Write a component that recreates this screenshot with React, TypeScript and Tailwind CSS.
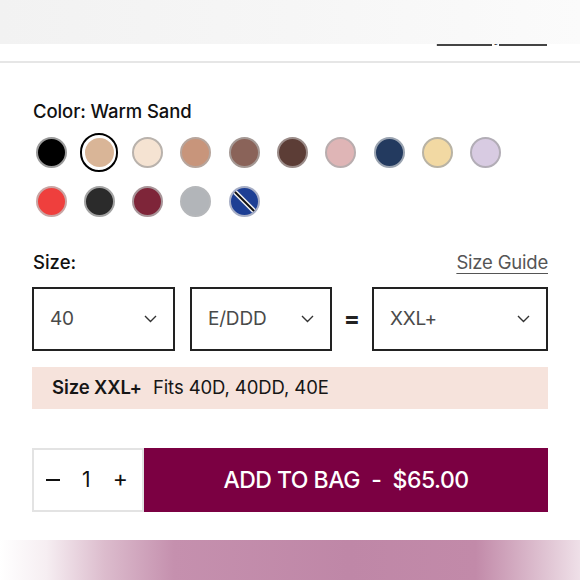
import React from "react";

const swatchesRow1 = [
  { c: "#000000", b: "#9a9a9a" },
  { c: "#d9b597", b: "#d9b597", selected: true },
  { c: "#f5e3d2", b: "#b9b2ac" },
  { c: "#c8957b", b: "#b7a59c" },
  { c: "#8a6359", b: "#a49894" },
  { c: "#5c3d36", b: "#9b8c89" },
  { c: "#dfb5b6", b: "#b9adae" },
  { c: "#233a5f", b: "#9aa3b0" },
  { c: "#f2d9a3", b: "#b9b3a4" },
  { c: "#d8cbe2", b: "#b2adb6" },
];

const swatchesRow2 = [
  { c: "#ef3f3d", b: "#c9a5a4" },
  { c: "#2b2b2b", b: "#a3a3a3" },
  { c: "#7e2539", b: "#a89599" },
  { c: "#b2b5b9", b: "#b5b7ba" },
  { c: "#1d3f94", b: "#a7aec5", striped: true },
];

type Sw = { c: string; b: string; selected?: boolean; striped?: boolean };

function Swatch({ s }: { s: Sw }) {
  return (
    <div className="w-[38px] h-[38px] flex items-center justify-center">
      {s.selected ? (
        <div className="w-[39px] h-[39px] rounded-full border-2 border-black flex items-center justify-center">
          <div className="w-[29px] h-[29px] rounded-full" style={{ backgroundColor: s.c }} />
        </div>
      ) : (
        <div
          className="w-[31px] h-[31px] rounded-full border-2 overflow-hidden relative"
          style={{ backgroundColor: s.c, borderColor: s.b }}
        >
          {s.striped && (
            <svg className="absolute inset-0" width="27" height="27" viewBox="0 0 27 27">
              <line x1="3" y1="3" x2="24" y2="24" stroke="#f2f2f2" strokeWidth="5" />
              <line x1="3" y1="3" x2="24" y2="24" stroke="#111" strokeWidth="2" />
            </svg>
          )}
        </div>
      )}
    </div>
  );
}

function Chevron() {
  return (
    <svg width="13" height="8" viewBox="0 0 13 8" fill="none">
      <polyline points="1,1 6.5,6.5 12,1" stroke="#333" strokeWidth="1.4" />
    </svg>
  );
}

function Select({ value, w }: { value: string; w: string }) {
  return (
    <div className={`${w} h-[64px] border-2 border-[#222] flex items-center justify-between pl-[16px] pr-[16px]`}>
      <span className="text-[19px] text-[#4a4a4a] tracking-[-0.2px]">{value}</span>
      <Chevron />
    </div>
  );
}

export default function App() {
  return (
    <div className="w-[580px] h-[580px] bg-white overflow-hidden flex flex-col" style={{ fontFamily: "Inter, 'Liberation Sans', sans-serif" }}>
      <div className="relative h-[61px] shrink-0">
        <div className="flex justify-end pr-[33px] pt-[25px]">
          <span className="text-[19px] leading-[20px] text-[#444] underline underline-offset-[3px] decoration-[1.5px]">See my Size</span>
        </div>
        <div className="absolute left-0 top-0 w-full h-[44px] bg-gradient-to-r from-[#f2f2f2] via-[#f6f6f6] to-[#fbfbfb]" />
      </div>
      <div className="h-[2px] bg-[#e6e6e6] shrink-0" />

      <div className="px-[32px] flex flex-col">
        <div className="mt-[36px] text-[18.5px] leading-[24px] font-medium text-[#111] pl-[1px] tracking-[-0.1px]">Color: Warm Sand</div>

        <div className="mt-[10px] flex flex-col gap-y-[11px]">
          <div className="flex gap-x-[10.3px]">
            {swatchesRow1.map((s, i) => (
              <Swatch key={i} s={s} />
            ))}
          </div>
          <div className="flex gap-x-[10.3px]">
            {swatchesRow2.map((s, i) => (
              <Swatch key={i} s={s} />
            ))}
          </div>
        </div>

        <div className="mt-[30px] flex justify-between items-center text-[18.5px] leading-[24px]">
          <span className="font-medium text-[#111] pl-[1px]">Size:</span>
          <span className="text-[#555] underline underline-offset-[4px] decoration-1 tracking-[-0.2px]">Size Guide</span>
        </div>

        <div className="mt-[13px] flex items-center">
          <Select value="40" w="w-[143px]" />
          <div className="w-[15px]" />
          <Select value="E/DDD" w="w-[142px]" />
          <div className="w-[40px] flex justify-center">
            <span className="text-[24px] font-bold text-[#222] leading-none">=</span>
          </div>
          <Select value="XXL+" w="w-[176px]" />
        </div>

        <div className="mt-[16px] h-[42px] bg-[#f6e3dc] flex items-center pl-[20px] text-[18.5px] text-[#161616] tracking-[-0.1px]">
          <span className="font-semibold">Size XXL+</span>
          <span className="ml-[11px]">Fits 40D, 40DD, 40E</span>
        </div>

        <div className="mt-[39px] flex h-[64px]">
          <div className="w-[112px] border-2 border-[#e3e3e3] flex items-center justify-between pl-[12px] pr-[14px] text-[21px] text-[#111]">
            <span className="block w-[14px] h-[2px] bg-[#111]" />
            <span>1</span>
            <span className="text-[23px] leading-none -mt-[2px]">+</span>
          </div>
          <div className="flex-1 bg-[#7b0042] flex items-center justify-center text-white text-[23px] font-medium tracking-[-0.5px]">
            ADD TO BAG&nbsp; -&nbsp; $65.00
          </div>
        </div>
      </div>

      <div className="mt-[28px] flex-1 bg-[linear-gradient(to_right,#ffffff_0%,#f6eef2_8%,#dcbccd_18%,#c590ae_30%,#bf87a7_60%,#c28aa9_82%,#e2c8d6_95%,#efe0e8_100%)]" />
    </div>
  );
}
